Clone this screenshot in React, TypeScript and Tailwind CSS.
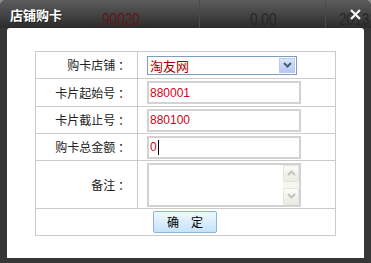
import React from 'react'

const cjk = "font-['Noto_Sans_CJK_SC','Noto_Sans',sans-serif]"

const rows = [
  { label: '购卡店铺 ：', kind: 'select', value: '淘友网' },
  { label: '卡片起始号 ：', kind: 'input', value: '880001' },
  { label: '卡片截止号 ：', kind: 'input', value: '880100' },
  { label: '购卡总金额 ：', kind: 'caret', value: '0' },
]

function Chevron() {
  return (
    <svg width="9" height="6" viewBox="0 0 9 6">
      <path d="M1 1 L4.5 4.5 L8 1" fill="none" stroke="#4a5a78" strokeWidth="2" />
    </svg>
  )
}

export default function App() {
  return (
    <div className={`w-[371px] h-[263px] bg-[#8c8c8c] ${cjk}`}>
      <div className="h-full rounded-t-[6px] overflow-hidden flex flex-col bg-[#363636]">
        {/* Title bar */}
        <div className="relative h-[28px] shrink-0 bg-gradient-to-b from-[#5c5c5c] via-[#454545] to-[#2b2b2b] flex items-center px-[10px]">
          {/* ghost text of page behind */}
          <span className="absolute left-[102px] top-[12px] text-[16px] leading-none text-[#5e1818] font-['Liberation_Sans_Narrow','Liberation_Sans',sans-serif] scale-x-[0.85] origin-left">90020</span>
          <span className="absolute left-[250px] top-[12px] text-[16px] leading-none text-[#262626] font-['Liberation_Sans',sans-serif] scale-x-[0.85] origin-left">0.00</span>
          <span className="absolute left-[339px] top-[12px] text-[16px] leading-none text-[#262626] font-['Liberation_Sans',sans-serif] scale-x-[0.85] origin-left">2013</span>
          <div className="absolute left-[199px] top-0 h-full w-px bg-[#4a4a4a]" />
          <div className="absolute left-[325px] top-0 h-full w-px bg-[#4a4a4a]" />
          <span className="relative text-white font-bold text-[13px] leading-none [text-shadow:1px_1px_0_#222]">店铺购卡</span>
          <svg className="absolute left-[349px] top-[8px]" width="13" height="13" viewBox="0 0 13 13">
            <path d="M2 2 L11 11 M11 2 L2 11" stroke="#333" strokeWidth="3" transform="translate(0.5 0.5)" />
            <path d="M2 2 L11 11 M11 2 L2 11" stroke="#f2f2f2" strokeWidth="2.4" />
          </svg>
        </div>

        {/* Body */}
        <div className="flex-1 px-[7px] pb-[5px] flex">
          <div className="flex-1 bg-white rounded-t-[3px] pt-[23px] pl-[28px]">
            <table className="border-collapse text-[12px] text-[#222]">
              <tbody>
                {rows.map((r, i) => (
                  <tr key={i} className={i === 1 ? 'h-[28px]' : 'h-[27px]'}>
                    <td className="w-[102px] border border-[#cbcbcb] text-right pr-[7px] p-0">{r.label}</td>
                    <td className="w-[198px] border border-[#cbcbcb] p-0 pl-[9px]">
                      {r.kind === 'select' ? (
                        <div className="w-[150px] h-[19px] border border-[#7f9db9] flex items-center justify-between pl-[2px] pr-[1px]">
                          <span className="text-[13px] leading-none text-[#a80000]">{r.value}</span>
                          <div className="w-[16px] h-[15px] bg-gradient-to-b from-[#dbe6fb] to-[#b4c8f4] border border-[#b8c9ee] flex items-center justify-center">
                            <Chevron />
                          </div>
                        </div>
                      ) : (
                        <div className="w-[154px] h-[23px] border-2 border-[#d2d2d2] flex items-center pl-[1px]">
                          <span className="text-[12px] leading-none text-[#d4001c] font-['Liberation_Sans',sans-serif]">{r.value}</span>
                          {r.kind === 'caret' && <span className="w-px h-[15px] bg-black ml-px" />}
                        </div>
                      )}
                    </td>
                  </tr>
                ))}
                <tr className="h-[48px]">
                  <td className="border border-[#cbcbcb] text-right pr-[7px] p-0">备注 ：</td>
                  <td className="border border-[#cbcbcb] p-0 pl-[9px]">
                    <div className="w-[154px] h-[44px] border-2 border-[#d2d2d2] flex justify-end">
                      <div className="w-[16px] flex flex-col justify-between bg-[#f6f6f0]">
                        <div className="h-[17px] bg-gradient-to-b from-[#fbfbf8] to-[#ebebe4] border border-[#e4e4dc] rounded-[2px] flex items-center justify-center">
                          <svg width="9" height="6" viewBox="0 0 9 6"><path d="M1 5 L4.5 1.5 L8 5" fill="none" stroke="#c4c4bc" strokeWidth="2" /></svg>
                        </div>
                        <div className="h-[17px] bg-gradient-to-b from-[#fbfbf8] to-[#ebebe4] border border-[#e4e4dc] rounded-[2px] flex items-center justify-center">
                          <svg width="9" height="6" viewBox="0 0 9 6"><path d="M1 1 L4.5 4.5 L8 1" fill="none" stroke="#c4c4bc" strokeWidth="2" /></svg>
                        </div>
                      </div>
                    </div>
                  </td>
                </tr>
                <tr className="h-[27px]">
                  <td colSpan={2} className="border border-[#cbcbcb] p-0 pl-[117px]">
                    <button className="w-[64px] h-[22px] border border-[#88b4de] rounded-[2px] bg-gradient-to-b from-[#f0f8fe] to-[#c6e2f8] text-[12px] text-black leading-none tracking-[12px] pl-[12px]">
                      确定
                    </button>
                  </td>
                </tr>
              </tbody>
            </table>
          </div>
        </div>
      </div>
    </div>
  )
}
